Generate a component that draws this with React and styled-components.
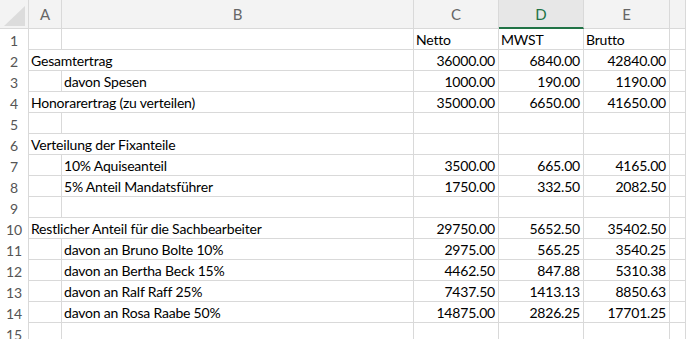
import React from "react";
import styled, { createGlobalStyle } from "styled-components";

const gridLine = "#d9d9d9";
const headerBg = "#f3f3f3";
const activeHeaderBg = "#e7e7e7";
const excelGreen = "#217346";

const GlobalStyle = createGlobalStyle`
  html, body {
    margin: 0;
    padding: 0;
    background: #fff;
  }
  body {
    font-family: Lato, "Liberation Sans", sans-serif;
    font-size: 14px;
    letter-spacing: -0.2px;
    color: #000;
  }
`;

const Sheet = styled.div`
  display: grid;
  grid-template-columns: 29px 33px 352px 85px 85px 86px 1fr;
  grid-template-rows: 29px;
  grid-auto-rows: 21px;
  width: 686px;
  height: 339px;
  overflow: hidden;
`;

const Corner = styled.div`
  position: relative;
  background: ${headerBg};
  border-right: 1px solid ${gridLine};
  border-bottom: 1px solid ${gridLine};
  box-sizing: border-box;

  &::after {
    content: "";
    position: absolute;
    right: 3px;
    bottom: 2px;
    width: 0;
    height: 0;
    border-left: 21px solid transparent;
    border-bottom: 20px solid #dcdcdc;
  }
`;

const ColHeader = styled.div`
  display: flex;
  align-items: center;
  justify-content: center;
  box-sizing: border-box;
  background: ${(p) => (p.$active ? activeHeaderBg : headerBg)};
  color: ${(p) => (p.$active ? excelGreen : "#666")};
  border-right: 1px solid ${gridLine};
  border-bottom: ${(p) =>
    p.$active ? `2px solid ${excelGreen}` : `1px solid ${gridLine}`};
  padding-top: ${(p) => (p.$active ? "1px" : "0")};
  font-size: 15px;
  letter-spacing: 0;
`;

const RowNum = styled.div`
  display: flex;
  align-items: center;
  justify-content: center;
  box-sizing: border-box;
  border-right: 1px solid ${gridLine};
  color: #555;
  font-size: 14px;
  letter-spacing: 0;
  padding-top: 1px;
`;

const Cell = styled.div`
  display: flex;
  align-items: center;
  justify-content: ${(p) => (p.$right ? "flex-end" : "flex-start")};
  box-sizing: border-box;
  grid-column: ${(p) => (p.$span ? `span ${p.$span}` : "auto")};
  border-right: 1px solid ${gridLine};
  border-bottom: 1px solid ${gridLine};
  padding: 1px 3px 0 2px;
  white-space: nowrap;
  overflow: visible;
`;

const rows = [
  { head: ["Netto", "MWST", "Brutto"] },
  { label: "Gesamtertrag", vals: ["36000.00", "6840.00", "42840.00"] },
  { label: "davon Spesen", indent: true, vals: ["1000.00", "190.00", "1190.00"] },
  { label: "Honorarertrag (zu verteilen)", vals: ["35000.00", "6650.00", "41650.00"] },
  {},
  { label: "Verteilung der Fixanteile" },
  { label: "10% Aquiseanteil", indent: true, vals: ["3500.00", "665.00", "4165.00"] },
  { label: "5% Anteil Mandatsführer", indent: true, vals: ["1750.00", "332.50", "2082.50"] },
  {},
  { label: "Restlicher Anteil für die Sachbearbeiter", vals: ["29750.00", "5652.50", "35402.50"] },
  { label: "davon an Bruno Bolte 10%", indent: true, vals: ["2975.00", "565.25", "3540.25"] },
  { label: "davon an Bertha Beck 15%", indent: true, vals: ["4462.50", "847.88", "5310.38"] },
  { label: "davon an Ralf Raff 25%", indent: true, vals: ["7437.50", "1413.13", "8850.63"] },
  { label: "davon an Rosa Raabe 50%", indent: true, vals: ["14875.00", "2826.25", "17701.25"] },
  {},
];

const Row = ({ n, row }) => {
  let labelCells;
  if (row.label && !row.indent) {
    labelCells = <Cell $span={2}>{row.label}</Cell>;
  } else {
    labelCells = (
      <>
        <Cell />
        <Cell>{row.label}</Cell>
      </>
    );
  }

  let valueCells;
  if (row.head) {
    valueCells = row.head.map((h) => <Cell key={h}>{h}</Cell>);
  } else {
    const vals = row.vals || ["", "", ""];
    valueCells = vals.map((v, i) => (
      <Cell key={i} $right>
        {v}
      </Cell>
    ));
  }

  return (
    <>
      <RowNum>{n}</RowNum>
      {labelCells}
      {valueCells}
      <Cell />
    </>
  );
};

const App = () => {
  return (
    <>
      <GlobalStyle />
      <Sheet>
        <Corner />
        <ColHeader>A</ColHeader>
        <ColHeader>B</ColHeader>
        <ColHeader>C</ColHeader>
        <ColHeader $active>D</ColHeader>
        <ColHeader>E</ColHeader>
        <ColHeader />
        {rows.map((row, i) => (
          <Row key={i} n={i + 1} row={row} />
        ))}
      </Sheet>
    </>
  );
};

export default App;
